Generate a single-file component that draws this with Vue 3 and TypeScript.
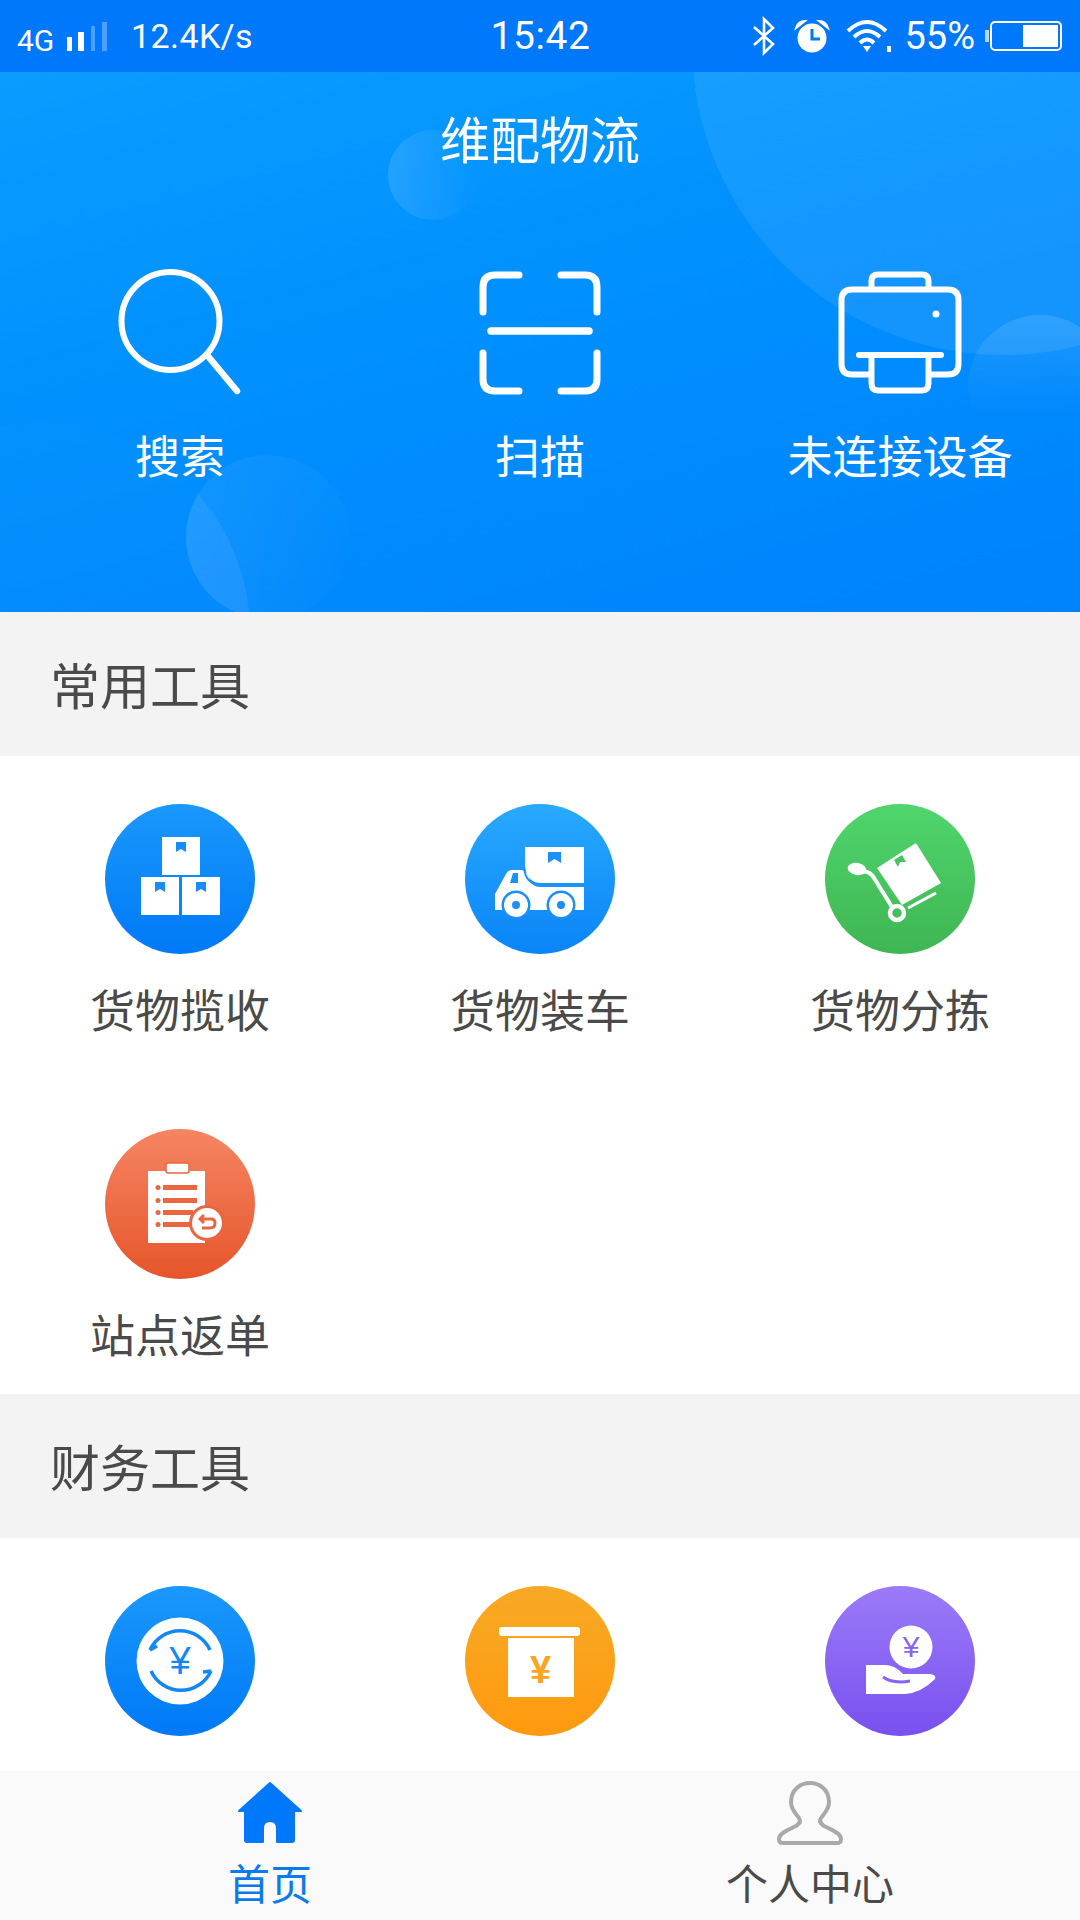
<script setup lang="ts">
interface Tool {
    name: string;
    icon: string;
    tint: string;
}

const actions = ["搜索", "扫描", "未连接设备"];

const commonTools: Tool[] = [
    { name: "货物揽收", icon: "boxes", tint: "tint_blue" },
    { name: "货物装车", icon: "truck", tint: "tint_sky" },
    { name: "货物分拣", icon: "cart", tint: "tint_green" },
    { name: "站点返单", icon: "receipt", tint: "tint_red" }
];

// labels of this row sit under the tab bar in the screenshot
const financeTools: Tool[] = [
    { name: "", icon: "exchange", tint: "tint_blue" },
    { name: "", icon: "deposit", tint: "tint_amber" },
    { name: "", icon: "hand", tint: "tint_purple" }
];
</script>

<template>
    <div class="page">
        <div class="status_bar">
            <div class="status_left">
                <span class="net_type">4G</span>
                <svg class="signal" width="42" height="30" viewBox="0 0 42 30">
                    <rect x="0" y="15" width="5" height="14" fill="#fff" />
                    <rect x="11" y="10" width="6" height="19" fill="#fff" />
                    <rect x="24" y="4" width="4" height="25" fill="#fff" opacity="0.3" />
                    <rect x="35" y="0" width="5" height="29" fill="#fff" opacity="0.3" />
                </svg>
                <span class="net_speed">12.4K/s</span>
            </div>
            <div class="status_time">15:42</div>
            <div class="status_right">
                <svg width="24" height="40" viewBox="0 0 24 40" fill="none" stroke="#fff" stroke-width="2.6">
                    <path d="M2 11 L21 28 L12 37 V3 L21 12 L2 29" />
                </svg>
                <svg class="alarm" width="38" height="34" viewBox="0 0 38 34">
                    <circle cx="19" cy="19" r="14.5" fill="#fff" />
                    <path d="M3 9 Q5 2 12 2 Z M35 9 Q33 2 26 2 Z" fill="#fff" stroke="#fff" stroke-width="2" />
                    <path d="M19 10 V20 H27" fill="none" stroke="#0078fb" stroke-width="3" />
                </svg>
                <svg class="wifi" width="46" height="34" viewBox="0 0 46 34" fill="none" stroke="#fff" stroke-width="4">
                    <path d="M2 12 Q21 -6 40 12" />
                    <path d="M8 18 Q21 6 34 18" />
                    <path d="M14 24 Q21 17 28 24" />
                    <path d="M17 27 L25 27 L21 33 Z" fill="#fff" stroke="none" />
                    <rect x="41" y="27" width="4" height="6" fill="#fff" stroke="none" />
                </svg>
                <span class="battery_text">55%</span>
                <div class="battery_nub"></div>
                <div class="battery">
                    <div class="battery_fill"></div>
                </div>
            </div>
        </div>

        <div class="main">
            <div class="hero">
                <svg class="hero_bg" width="1080" height="540" viewBox="0 0 1080 540">
                    <defs>
                        <linearGradient id="fadeRight" x1="0" y1="0" x2="1" y2="0">
                            <stop offset="0" stop-color="#fff" stop-opacity="0.12" />
                            <stop offset="1" stop-color="#fff" stop-opacity="0" />
                        </linearGradient>
                        <linearGradient id="fadeDown" x1="0" y1="0" x2="0" y2="1">
                            <stop offset="0" stop-color="#fff" stop-opacity="0.12" />
                            <stop offset="0.7" stop-color="#fff" stop-opacity="0" />
                        </linearGradient>
                        <linearGradient id="fadeCorner" x1="0" y1="0.3" x2="1" y2="0.5">
                            <stop offset="0" stop-color="#fff" stop-opacity="0.07" />
                            <stop offset="1" stop-color="#fff" stop-opacity="0.01" />
                        </linearGradient>
                        <clipPath id="lensClip">
                            <circle cx="40" cy="560" r="210" />
                        </clipPath>
                    </defs>
                    <circle cx="1003" cy="-28" r="311" fill="#fff" opacity="0.08" />
                    <circle cx="433" cy="103" r="45" fill="url(#fadeRight)" />
                    <circle cx="1040" cy="315" r="72" fill="url(#fadeDown)" />
                    <circle cx="40" cy="560" r="210" fill="#fff" opacity="0.012" />
                    <circle cx="268" cy="465" r="82" fill="url(#fadeCorner)" />
                    <circle cx="268" cy="465" r="82" fill="#fff" opacity="0.06" clip-path="url(#lensClip)" />
                </svg>
                <div class="hero_title">维配物流</div>
                <div class="hero_actions">
                    <div v-for="(label, i) in actions" :key="label" class="hero_action">
                        <svg width="140" height="130" viewBox="0 0 140 130" fill="none" stroke="#fff" stroke-linecap="round">
                            <template v-if="i === 0">
                                <circle cx="60.5" cy="54" r="49" stroke-width="6" />
                                <path d="M97 88 L127 124" stroke-width="6.5" />
                            </template>
                            <template v-else-if="i === 1">
                                <g stroke-width="7">
                                    <path d="M13 45 V20 Q13 8 25 8 H49" />
                                    <path d="M91 8 H115 Q127 8 127 20 V45" />
                                    <path d="M13 86 V112 Q13 124 25 124 H49" />
                                    <path d="M91 124 H115 Q127 124 127 112 V86" />
                                </g>
                                <path d="M21 64 H119" stroke-width="7.5" />
                            </template>
                            <template v-else>
                                <g stroke-width="6">
                                    <path d="M39 107.5 H22 Q11.5 107.5 11.5 97 V33 Q11.5 22.5 22 22.5 H118 Q128.5 22.5 128.5 33 V97 Q128.5 107.5 118 107.5 H101" />
                                    <path d="M41.5 22 V14 Q41.5 7.5 48 7.5 H92 Q98.5 7.5 98.5 14 V22" />
                                    <path d="M41.5 88 V116 Q41.5 123.5 48 123.5 H92 Q98.5 123.5 98.5 116 V88" />
                                    <path d="M29 88 H111" />
                                </g>
                                <circle cx="106" cy="47" r="3.5" fill="#fff" stroke="none" />
                            </template>
                        </svg>
                        <span class="hero_label">{{ label }}</span>
                    </div>
                </div>
            </div>

            <div class="section_head">常用工具</div>
            <div class="tool_grid">
                <div v-for="tool in commonTools" :key="tool.name" class="tool">
                    <div class="tool_icon" :class="tool.tint">
                        <svg width="150" height="150" viewBox="0 0 150 150">
                            <template v-if="tool.icon === 'boxes'">
                                <g fill="#fff">
                                    <rect x="57" y="33" width="38" height="38" />
                                    <rect x="36" y="73" width="38" height="38" />
                                    <rect x="77" y="73" width="38" height="38" />
                                </g>
                                <g fill="#1a8bf9">
                                    <path d="M71 38 H81 V48 L76 45 L71 48 Z" />
                                    <path d="M50 78 H60 V88 L55 85 L50 88 Z" />
                                    <path d="M91 78 H101 V88 L96 85 L91 88 Z" />
                                </g>
                            </template>
                            <template v-else-if="tool.icon === 'truck'">
                                <path d="M30 106 V90 L41 70 Q43 66 47 66 H56 Q62 66 64 74 Q66 83 76 83 H119 V106 Z" fill="#fff" />
                                <path d="M60 43 H119 V79 H76 Q62 79 60 62 Z" fill="#fff" />
                                <path d="M59 64 Q61 81 76 81 H119" fill="none" stroke="#1c91f9" stroke-width="2" />
                                <path d="M48 69 H53 V79 H45 Z" fill="#1c91f9" />
                                <path d="M83 48 H96 V59 L89.5 55 L83 59 Z" fill="#1c91f9" />
                                <g fill="#1c8ef9">
                                    <circle cx="51" cy="101" r="14.5" />
                                    <circle cx="96" cy="101" r="14.5" />
                                </g>
                                <g fill="#fff">
                                    <circle cx="51" cy="101" r="12" />
                                    <circle cx="96" cy="101" r="12" />
                                </g>
                                <g fill="#1c8ef9">
                                    <circle cx="51" cy="101" r="4" />
                                    <circle cx="96" cy="101" r="4" />
                                </g>
                            </template>
                            <template v-else-if="tool.icon === 'cart'">
                                <path d="M52 64 L91 39 L116 79 L77 101 Z" fill="#fff" />
                                <path d="M69 56 L77 51 L81 58 L75 58 L73 63 Z" fill="#47c360" />
                                <ellipse cx="32" cy="65" rx="9.5" ry="6" fill="#fff" transform="rotate(10 32 65)" />
                                <path d="M38 67 Q46 68 49 74 L67 103" fill="none" stroke="#fff" stroke-width="4" />
                                <path d="M83 104 L111 89" fill="none" stroke="#fff" stroke-width="3" />
                                <circle cx="72" cy="109" r="7" fill="none" stroke="#fff" stroke-width="4.5" />
                            </template>
                            <template v-else>
                                <rect x="43" y="42" width="57" height="72" fill="#fff" />
                                <rect x="61" y="34" width="23" height="10" rx="2" fill="#fff" stroke="#e96640" stroke-width="1.5" />
                                <g fill="#e96640">
                                    <rect x="58" y="56" width="34" height="5" />
                                    <rect x="58" y="69" width="34" height="5" />
                                    <rect x="58" y="81" width="30" height="5" />
                                    <rect x="58" y="93" width="30" height="5" />
                                    <circle cx="53" cy="58.5" r="2.5" />
                                    <circle cx="53" cy="71.5" r="2.5" />
                                    <circle cx="53" cy="83.5" r="2.5" />
                                    <circle cx="53" cy="95.5" r="2.5" />
                                    <circle cx="102" cy="94" r="18" />
                                </g>
                                <circle cx="102" cy="94" r="15" fill="#fff" />
                                <path d="M96 90 H106 Q110 90 110 94 Q110 99 105 99 H97 M99 86 L95 90 L99 94" fill="none" stroke="#e96640" stroke-width="3" />
                            </template>
                        </svg>
                    </div>
                    <span class="tool_label">{{ tool.name }}</span>
                </div>
            </div>

            <div class="section_head">财务工具</div>
            <div class="tool_grid">
                <div v-for="tool in financeTools" :key="tool.icon" class="tool">
                    <div class="tool_icon" :class="tool.tint">
                        <svg width="150" height="150" viewBox="0 0 150 150">
                            <template v-if="tool.icon === 'exchange'">
                                <circle cx="75" cy="75" r="43.5" fill="#fff" />
                                <g fill="none" stroke="#1288f8" stroke-width="3.5">
                                    <path d="M45 64 A33 33 0 0 1 105 64" />
                                    <path d="M45 64 L52 60" />
                                    <path d="M46 85 A33 33 0 0 0 106 85" />
                                    <path d="M106 85 L98 86" />
                                </g>
                                <text x="75" y="88" class="yen yen_blue">¥</text>
                            </template>
                            <template v-else-if="tool.icon === 'deposit'">
                                <rect x="34" y="41" width="81" height="9" rx="3" fill="#fff" />
                                <rect x="43" y="52" width="66" height="59" fill="#fff" />
                                <text x="75.5" y="97" class="yen yen_amber">¥</text>
                            </template>
                            <template v-else>
                                <circle cx="86" cy="61" r="21.5" fill="#fff" />
                                <text x="86" y="71" class="yen yen_small yen_purple">¥</text>
                                <path d="M41 79 H60 Q70 79 78 88 H105 Q112 89 110 93 Q96 107 80 108 H41 Z" fill="#fff" />
                                <path d="M58 91 Q68 98 85 95" fill="none" stroke="#8663f4" stroke-width="3" />
                            </template>
                        </svg>
                    </div>
                    <span v-if="tool.name" class="tool_label">{{ tool.name }}</span>
                </div>
            </div>
        </div>

        <div class="tab_bar">
            <div class="tab tab_active">
                <svg width="70" height="68" viewBox="0 0 70 68">
                    <path d="M35 3 L66 31 L59 31 V60 Q59 62 57 62 H42 V48 Q42 41 35 41 Q28 41 28 48 V62 H12 Q10 62 10 60 V31 L4 31 Z" fill="#0078fb" stroke="#0078fb" stroke-width="2" stroke-linejoin="round" />
                </svg>
                <span class="tab_label">首页</span>
            </div>
            <div class="tab">
                <svg width="70" height="68" viewBox="0 0 70 68">
                    <path d="M35 3 C25 3 16 10 16 22 C16 30 22 35 24 38 C26 41 24 44 21 46 C13 50 4 53 4 59 C4 62 5 63 8 63 H62 C65 63 66 62 66 59 C66 53 57 50 49 46 C46 44 44 41 46 38 C48 35 54 30 54 22 C54 10 45 3 35 3 Z" fill="none" stroke="#a9a9a9" stroke-width="4" />
                </svg>
                <span class="tab_label">个人中心</span>
            </div>
        </div>
    </div>
</template>

<style>
html, body {
    margin: 0;
    background: #fff;
}
</style>

<style scoped>
.page {
    width: 1080px;
    height: 1920px;
    display: flex;
    flex-direction: column;
    overflow: hidden;
    background: #fff;
    font-family: "Noto Sans CJK SC", "Noto Sans", sans-serif;
    font-weight: 400;
}

.status_bar {
    height: 72px;
    flex-shrink: 0;
    display: flex;
    align-items: center;
    padding: 0 18px 0 17px;
    background: #0078fb;
    color: #fff;
    font-family: Roboto, sans-serif;
    font-weight: 400;
}
.status_left {
    flex: 1;
    display: flex;
    align-items: center;
}
.net_type {
    width: 50px;
    font-size: 30px;
    padding-top: 8px;
}
.signal {
    margin-top: 2px;
}
.net_speed {
    margin-left: 22px;
    font-size: 34px;
    letter-spacing: 0.4px;
}
.status_time {
    font-size: 39px;
    letter-spacing: 0.6px;
    margin-left: 2px;
}
.status_right {
    flex: 1;
    display: flex;
    align-items: center;
    justify-content: flex-end;
}
.alarm {
    margin-left: 17px;
}
.wifi {
    margin-left: 15px;
}
.battery_text {
    margin-left: 12px;
    font-size: 38px;
}
.battery_nub {
    width: 4px;
    height: 12px;
    margin-left: 10px;
    background: rgba(255, 255, 255, 0.7);
}
.battery {
    width: 72px;
    height: 30px;
    margin-left: 1px;
    box-sizing: border-box;
    border: 2px solid #fff;
    border-radius: 5px;
    padding: 2px 2px 2px 31px;
}
.battery_fill {
    height: 100%;
    background: #fff;
}

.main {
    flex: 1;
    min-height: 0;
    overflow: hidden;
}

.hero {
    position: relative;
    height: 540px;
    overflow: hidden;
    background: linear-gradient(165deg, #0a9cff 0%, #0090ff 45%, #0082fb 100%);
    color: #fff;
}
.hero_bg {
    position: absolute;
    left: 0;
    top: 0;
}
.hero_title {
    position: relative;
    height: 134px;
    line-height: 130px;
    text-align: center;
    font-size: 50px;
}
.hero_actions {
    position: relative;
    display: grid;
    grid-template-columns: repeat(3, 1fr);
    padding-top: 61px;
}
.hero_action {
    display: flex;
    flex-direction: column;
    align-items: center;
}
.hero_label {
    margin-top: 28px;
    line-height: 60px;
    font-size: 45px;
}

.section_head {
    height: 144px;
    line-height: 142px;
    padding-left: 50px;
    background: #f3f3f3;
    color: #4a4a4a;
    font-size: 50px;
}

.tool_grid {
    display: grid;
    grid-template-columns: repeat(3, 1fr);
    row-gap: 90px;
    padding: 48px 0 30px;
}
.tool {
    display: flex;
    flex-direction: column;
    align-items: center;
}
.tool_icon {
    width: 150px;
    height: 150px;
    border-radius: 50%;
}
.tool_icon svg {
    display: block;
}
.tool_label {
    margin-top: 25px;
    line-height: 60px;
    color: #4a4a4a;
    font-size: 45px;
}
.tint_blue {
    background: linear-gradient(#1b98fc, #0079f7);
}
.tint_sky {
    background: linear-gradient(#29a9fe, #0a84f8);
}
.tint_green {
    background: linear-gradient(#50d56d, #3fb653);
}
.tint_red {
    background: linear-gradient(#f68562, #e6552b);
}
.tint_amber {
    background: linear-gradient(#f8a925, #ff9a0f);
}
.tint_purple {
    background: linear-gradient(#9b7bf8, #7850f0);
}
.yen {
    font-family: "Liberation Sans", sans-serif;
    font-size: 38px;
    text-anchor: middle;
}
.yen_small {
    font-size: 30px;
}
.yen_blue {
    fill: #1288f8;
}
.yen_amber {
    fill: #fba51f;
    font-weight: 700;
}
.yen_purple {
    fill: #8663f4;
}

.tab_bar {
    height: 149px;
    flex-shrink: 0;
    display: flex;
    background: #fafafa;
}
.tab {
    flex: 1;
    display: flex;
    flex-direction: column;
    align-items: center;
    padding-top: 9px;
    color: #4a4a4a;
}
.tab_active {
    color: #0a7be8;
}
.tab_label {
    margin-top: 9px;
    line-height: 50px;
    font-size: 42px;
}
</style>
